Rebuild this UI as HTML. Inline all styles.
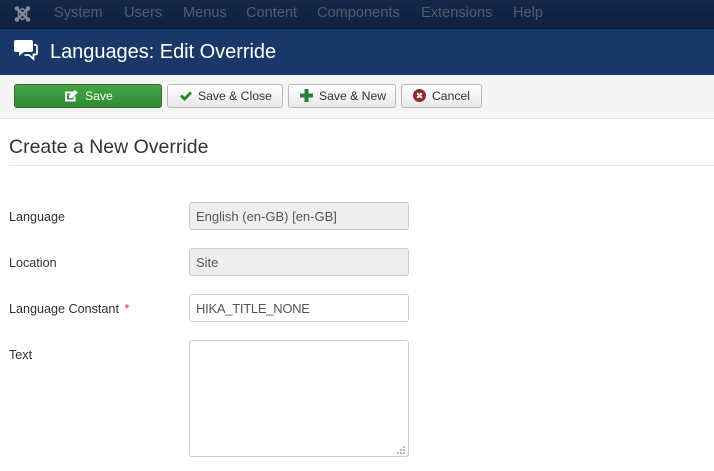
<!DOCTYPE html>
<html lang="en">
<head>
<meta charset="utf-8">
<title>Languages: Edit Override</title>
<style>
html,body{margin:0;padding:0;width:714px;height:471px;overflow:hidden;background:#fff;font-family:"Liberation Sans",Arial,sans-serif;color:#333}
*{box-sizing:border-box}
.a{position:absolute}
#nav{left:0;top:0;width:714px;height:29px;background:linear-gradient(#14284a,#11213f);border-bottom:1px solid #0c1a33}
.m{position:absolute;top:5px;font-size:14.6px;line-height:17px;color:#525d72;white-space:nowrap}
#head{left:0;top:29px;width:714px;height:46px;background:#1a3867}
#title{left:50px;top:40px;font-size:20px;line-height:25px;color:#fff;white-space:nowrap;letter-spacing:-.03px}
#bar{left:0;top:75px;width:714px;height:44px;background:#f5f5f5;border-bottom:1px solid #e3e3e3}
.b{position:absolute;top:84px;height:24px;border:1px solid #b9b9b9;border-radius:3px;background:linear-gradient(#fff,#e8e8e8);font-size:12.2px;line-height:22px;color:#333;white-space:nowrap}
.b span{position:absolute;top:0}
.b svg{position:absolute}
#save{left:14px;width:148px;background:linear-gradient(#46a546,#2f8a32);border-color:#2a6f2c;color:#fff}
h2{position:absolute;left:9px;top:135px;margin:0;font-weight:400;font-size:19.5px;line-height:25px;color:#333;white-space:nowrap}
#rule{left:9px;top:165px;width:705px;height:1px;background:#e5e5e5}
.l{position:absolute;left:9px;font-size:12.6px;line-height:18px;color:#333;white-space:nowrap}
.i{position:absolute;left:189px;width:220px;height:28px;border:1px solid #ccc;border-radius:3px;font-size:13px;line-height:28px;padding-left:6px;color:#555;background:#fff;white-space:nowrap}
.d{background:#eee}
</style>
</head>
<body>
<div id="nav" class="a"></div>
<svg class="a" style="left:14px;top:5px" width="17" height="18" viewBox="0 0 17 18"><g fill="none" stroke="#7f8896" stroke-width="2.4"><path d="M3 3.500 14 14.500M14 3.500 3 14.500"/><path d="M4.500 6.500 8.500 3.500 12.500 6.500 12.500 11.500 8.500 14.500 4.500 11.500Z" stroke-width="1.600"/></g><g fill="#7f8896"><circle cx="3" cy="3.500" r="2.300"/><circle cx="14" cy="3.500" r="2.300"/><circle cx="3" cy="14.500" r="2.300"/><circle cx="14" cy="14.500" r="2.300"/></g></svg>
<div class="m" style="left:54px">System</div>
<div class="m" style="left:124px">Users</div>
<div class="m" style="left:183px">Menus</div>
<div class="m" style="left:246px">Content</div>
<div class="m" style="left:317px">Components</div>
<div class="m" style="left:421px">Extensions</div>
<div class="m" style="left:513px">Help</div>

<div id="head" class="a"></div>
<svg class="a" style="left:14px;top:40px" width="24" height="21" viewBox="0 0 24 21"><path d="M2 0H17Q19 0 19 2V10Q19 12 17 12H10L5 16V12H2Q0 12 0 10V2Q0 0 2 0Z" fill="#fff"/><path d="M20 5H21.500Q23 5 23 6.500V13Q23 14.500 21.500 14.500H19.500V19L15 15H10.500" fill="none" stroke="#fff" stroke-width="1.700"/></svg>
<div id="title" class="a">Languages: Edit Override</div>

<div id="bar" class="a"></div>
<div id="save" class="b"><svg style="left:50px;top:5px" width="13" height="12" viewBox="0 0 13 12"><path d="M0 1.500H8.500V3.500H2V9.500H8.500V6.500H10.500V11.500H0Z" fill="#fff"/><path d="M4 5.500 10 0 13 2.500 7 8H4Z" fill="#fff"/></svg><span style="left:70px">Save</span></div>
<div class="b" style="left:167px;width:116px"><svg style="left:11px;top:6px" width="14" height="11" viewBox="0 0 14 11"><path d="M1 5.500 3 3.500 5.500 6 11 .5 13 2.500 5.500 10Z" fill="#2f7d32"/></svg><span style="left:30px">Save &amp; Close</span></div>
<div class="b" style="left:288px;width:108px"><svg style="left:11px;top:4px" width="13" height="13" viewBox="0 0 13 13"><path d="M4.500 0H8.500V4.500H13V8.500H8.500V13H4.500V8.500H0V4.500H4.500Z" fill="#2f7d32"/></svg><span style="left:30px">Save &amp; New</span></div>
<div class="b" style="left:401px;width:81px"><svg style="left:11px;top:4px" width="13" height="13" viewBox="0 0 13 13"><circle cx="6.500" cy="6.500" r="6.500" fill="#942a25"/><path d="M4.200 4.200 8.800 8.800M8.800 4.200 4.200 8.800" stroke="#fff" stroke-width="2"/></svg><span style="left:30px">Cancel</span></div>

<h2>Create a New Override</h2>
<div id="rule" class="a"></div>

<div class="l" style="top:208px">Language</div>
<div class="i d" style="top:202px">English (en-GB) [en-GB]</div>
<div class="l" style="top:254px">Location</div>
<div class="i d" style="top:248px">Site</div>
<div class="l" style="top:300px">Language Constant <span style="color:#bd362f;margin-left:2px">*</span></div>
<div class="i" style="top:294px;letter-spacing:-.27px">HIKA_TITLE_NONE</div>
<div class="l" style="top:346px">Text</div>
<div class="i" style="top:340px;height:117px"></div>
<svg class="a" style="left:397px;top:446px" width="9" height="9" viewBox="0 0 9 9" fill="#bbb"><rect x="6" y="0" width="2" height="2"/><rect x="3" y="3" width="2" height="2"/><rect x="6" y="3" width="2" height="2"/><rect x="0" y="6" width="2" height="2"/><rect x="3" y="6" width="2" height="2"/><rect x="6" y="6" width="2" height="2"/></svg>
</body>
</html>
